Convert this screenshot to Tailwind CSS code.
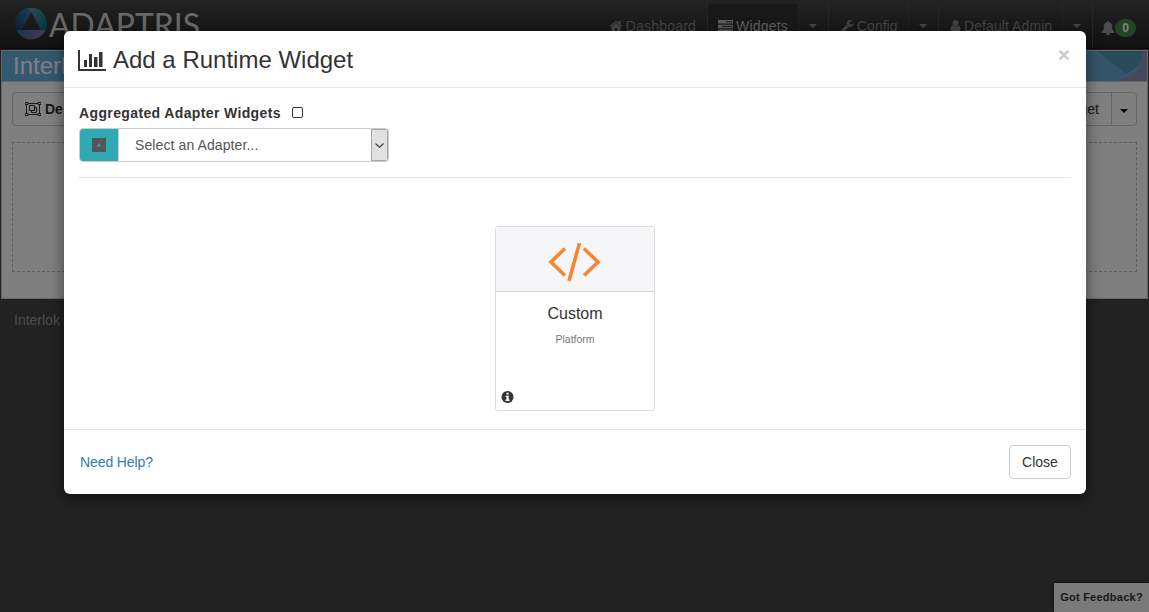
<!DOCTYPE html>
<html lang="en">
<head>
<meta charset="utf-8">
<title>Add a Runtime Widget</title>
<script src="https://cdn.jsdelivr.net/npm/@tailwindcss/browser@4"></script>
</head>
<body class="h-[612px] w-[1149px] overflow-hidden bg-[#444] font-['Liberation_Sans',Arial,sans-serif] text-sm text-[#333]">
<svg class="hidden">
  <symbol id="home" viewBox="0 0 1792 1792"><path d="M1472 992v480q0 26-19 45t-45 19h-384v-384h-256v384h-384q-26 0-45-19t-19-45v-480q0-1 .5-3t.5-3l575-474 575 474q1 2 1 6zm223-69l-62 74q-8 9-21 11h-3q-13 0-21-7l-692-577-692 577q-12 8-24 7-13-2-21-11l-62-74q-8-10-7-23.5t11-21.5l719-599q32-26 76-26t76 26l244 204v-195q0-14 9-23t23-9h192q14 0 23 9t9 23v408l219 182q10 8 11 21.5t-7 23.5z"/></symbol>
  <symbol id="wrench" viewBox="0 0 1792 1792"><path d="M448 1472q0-26-19-45t-45-19-45 19-19 45 19 45 45 19 45-19 19-45zm644-420l-682 682q-37 37-90 37-52 0-91-37l-106-108q-38-36-38-90 0-53 38-91l681-681q39 98 114.5 173.5t173.5 114.5zm634-435q0 39-23 106-47 134-164.5 217.5t-258.5 83.5q-185 0-316.5-131.5t-131.5-316.5 131.5-316.5 316.5-131.5q58 0 121.5 16.5t107.5 46.5q16 11 16 28t-16 28l-293 169v224l193 107q5-3 79-48.5t135.5-81 70.5-35.5q15 0 23.5 10t8.5 25z"/></symbol>
  <symbol id="user" viewBox="192 0 1408 1792"><path d="M1536 1399q0 109-62.500 187t-150.500 78h-854q-88 0-150.500-78t-62.500-187q0-85 8.500-160.500t31.500-152 58.500-131 94-89 134.500-34.500q131 128 313 128t313-128q76 0 134.500 34.500t94 89 58.500 131 31.500 152 8.500 160.500zm-256-887q0 159-112.500 271.500t-271.500 112.500-271.500-112.500-112.500-271.500 112.500-271.500 271.500-112.500 271.500 112.500 112.500 271.500z"/></symbol>
  <symbol id="bell" viewBox="0 0 1792 1792"><path d="M1728 1408q0 52-38 90t-90 38h-448q0 106-75 181t-181 75-181-75-75-181h-448q-52 0-90-38t-38-90q50-42 91-88t85-119.500 74.500-158.500 50-206 19.500-260q0-152 117-282.500t307-158.500q-8-19-8-39 0-40 28-68t68-28 68 28 28 68q0 20-8 39 190 28 307 158.500t117 282.500q0 139 19.500 260t50 206 74.500 158.500 85 119.500 91 88z"/></symbol>
  <symbol id="caret" viewBox="0 0 8 4"><path d="M0 0h8L4 4z"/></symbol>
</svg>

<div class="relative h-full">
  <header class="flex h-[49px] justify-between border-b border-[#111] bg-linear-to-b from-[#464646] to-[#222] text-[#888]">
    <div class="flex pl-[14px] pt-2">
      <svg width="190" height="40" viewBox="0 0 190 40">
        <defs>
          <linearGradient id="blade1" x1="0" y1="1" x2="1" y2="0"><stop offset="0" stop-color="#142f5c"/><stop offset="1" stop-color="#3d83b4"/></linearGradient>
          <linearGradient id="blade2" x1="0" y1="0" x2=".6" y2="1"><stop offset="0" stop-color="#5aa5b8"/><stop offset="1" stop-color="#0d6a7c"/></linearGradient>
          <linearGradient id="blade3"><stop offset="0" stop-color="#2d62a0"/><stop offset="1" stop-color="#8f78a5"/></linearGradient>
          <clipPath id="disc"><circle cx="17" cy="15.500" r="16"/></clipPath>
        </defs>
        <g clip-path="url(#disc)">
          <path d="M0-1h15l2.500 5.500L7 22 2 25-2 20z" fill="url(#blade1)"/>
          <path d="M13-1h21v25l-7-2L17.500 4.500z" fill="url(#blade2)"/>
          <path d="M1 22h26l7 1v10H0z" fill="url(#blade3)"/>
        </g>
        <text x="35" y="28.500" textLength="151" lengthAdjust="spacingAndGlyphs" font-family="Lato, sans-serif" font-size="32" fill="#d2d2d2">ADAPTRIS</text>
      </svg>
    </div>
    <nav class="mt-1 flex h-[44px]">
      <div class="flex items-center gap-[3px] pr-[11px]"><svg class="size-[14px] fill-current"><use href="#home"/></svg><span class="tracking-[0.2px]">Dashboard</span></div>
      <div class="flex w-[91px] items-center gap-[3px] border-l border-[#4c4c4c] bg-[#303030] pl-[10px] text-[#bbb]">
        <svg class="h-[13px] w-[15px] fill-current" viewBox="0 0 15 13"><path d="M0 0h15v3.500H0zM0 4.700h15v3.500H0zM0 9.400h15v3.500H0z"/><path d="M8 1.300h6v1H8zM4 6h10v1H4zM10 10.700h4v1h-4z" fill="#333"/></svg><span class="tracking-[0.2px]">Widgets</span></div>
      <div class="flex w-[30px] items-center justify-center border-l border-dotted border-[#555] pr-[2px]"><svg class="h-1 w-2 fill-current"><use href="#caret"/></svg></div>
      <div class="flex w-[80px] items-center gap-[3px] border-l border-[#4c4c4c] pl-[11px]"><svg class="size-[14px] fill-current"><use href="#wrench"/></svg>Config</div>
      <div class="flex w-[30px] items-center justify-center border-l border-dotted border-[#555] pr-[2px]"><svg class="h-1 w-2 fill-current"><use href="#caret"/></svg></div>
      <div class="flex w-[124px] items-center gap-[3px] border-l border-[#4c4c4c] pl-[11px]"><svg class="h-[14px] w-[11px] fill-current"><use href="#user"/></svg><span class="tracking-[0.08px]">Default Admin</span></div>
      <div class="flex w-[30px] items-center justify-center border-l border-dotted border-[#555] pr-[2px]"><svg class="h-1 w-2 fill-current"><use href="#caret"/></svg></div>
      <div class="flex w-[57px] items-center border-l border-[#4c4c4c] pl-2 pt-1"><svg class="size-[14px] fill-[#999]"><use href="#bell"/></svg><span class="flex h-[18px] w-[21px] items-center justify-center rounded-full bg-[#468847] text-xs font-bold text-white">0</span></div>
    </nav>
  </header>

  <main class="mx-px mt-px h-[249px] border border-[#ccc] bg-white">
    <div class="flex h-[31px] items-center justify-between border-b border-[#ccc] bg-[#67b1e0] pl-[11px] text-2xl text-white">
      <h1>Interlok</h1>
      <svg width="61" height="30" viewBox="0 0 61 30"><path d="M11 0h46c1 11-8 20-17 23z" fill="#5597b4"/><path d="M11 0h-11v30h27l13-7z" fill="#69a9d6"/><path d="M57 0h4v30H27c20-4 31-15 30-30z" fill="#8d90b7"/></svg>
    </div>
    <div class="flex justify-between px-[10px] pt-[10px]">
      <button class="flex h-[34px] w-[66px] items-center gap-1 rounded border border-[#ccc] pl-3 font-bold"><svg width="16" height="14" viewBox="0 0 16 14" fill="none" stroke="#333"><path d="M1.500 1.500h13v11h-13zM4.500 3.500h5v5h-5zM9.500 5.500h2v5h-5v-2"/><path d="M0 .5h3v2H0zM13 .5h3v2h-3zM0 11.500h3v2H0zM13 11.500h3v2h-3z" fill="#fff"/></svg>De</button>
      <div class="flex h-[34px] rounded border border-[#ccc]"><button class="px-3">Add Widget</button><button class="flex w-[25px] items-center justify-center border-l border-[#ccc] pt-1"><svg class="h-1 w-2"><use href="#caret"/></svg></button></div>
    </div>
    <div class="mx-[10px] mt-4 h-[130px] border border-dashed border-[#bbb]"></div>
  </main>
  <footer class="pl-[14px] pt-[11px] text-[#999]">Interlok</footer>
  <div class="absolute bottom-0 right-0 flex h-[29px] w-[95px] items-center justify-center bg-[#f5f5f5] pt-px text-[11px] font-bold tracking-[0.25px] shadow-[0_0_3px_#000]">Got Feedback?</div>
</div>

<div class="absolute inset-0 bg-black/50"></div>

<section class="absolute left-16 top-[31px] flex h-[463px] w-[1022px] flex-col rounded-md bg-white shadow-[0_5px_15px_rgba(0,0,0,0.5)]">
  <div class="flex h-[57px] justify-between border-b border-[#e5e5e5] pl-[14px] pr-4">
    <h2 class="flex items-center gap-[7px] pt-[2px] text-2xl"><svg width="28" height="21" viewBox="0 0 28 21" fill="#333"><path d="M0 0h2v19h26v2H0zM6 10h3v7H6zM11 4h3v13h-3zM16 7h3.500v10H16zM21 2h3.500v15H21z"/></svg>Add a Runtime Widget</h2>
    <button class="h-[47px] text-[21px] font-bold text-[#ccc]">×</button>
  </div>
  <div class="flex h-[342px] flex-col border-b border-[#e5e5e5] px-[15px] pt-[15px]">
    <label class="flex h-5 items-center gap-[11px] font-bold tracking-[0.37px]">Aggregated Adapter Widgets<span class="mb-px size-[11px] rounded-[2px] border border-[#333]"></span></label>
    <div class="mt-[5px] flex h-[34px] w-[310px] overflow-hidden rounded border border-[#ccc]">
      <div class="flex w-[39px] items-center justify-center border-r border-[#ccc] bg-[#2fa9b3] pr-px"><svg width="14" height="14" viewBox="0 0 14 14"><path d="M0 0h14v14H0z" fill="#555"/><path d="M7 5l2 3.500H5z" fill="#2fa9b3"/><path d="M7.500 5L11 0M9 8.500l5 4M5 8.500H0" stroke="#3c7579" stroke-width=".6"/></svg></div>
      <div class="flex flex-1 items-center pl-4 tracking-[0.1px] text-[#555]">Select an Adapter...</div>
      <div class="flex w-[17px] items-center justify-center border border-[#a5a5a5] bg-[#e1e1e1]"><svg width="9" height="5" viewBox="0 0 9 5" fill="none" stroke="#444" stroke-width="1.200"><path d="M.5.500L4.500 4.300 8.500.500"/></svg></div>
    </div>
    <hr class="mt-[15px] border-[#e5e5e5]">
    <article class="mx-auto mt-12 flex h-[185px] w-[160px] flex-col rounded-[3px] border border-[#ddd]">
      <div class="flex h-[65px] items-center justify-center border-b border-[#d6d6da] bg-[#f6f6f9] pr-[2px] pt-[6px]"><svg width="53" height="38" viewBox="0 0 53 38" fill="none" stroke="#f58634" stroke-width="3.600"><path d="M17 5.500L3 19l14 13.500M36 5.500L50 19 36 32.500M31.500 0L21 38"/></svg></div>
      <h3 class="mt-[10px] text-center text-base">Custom</h3>
      <p class="mt-1 text-center text-[10.500px] leading-[18px] text-[#777]">Platform</p>
      <svg class="mb-[7px] ml-[5px] mt-auto" width="13" height="12" viewBox="0 0 12 12"><circle cx="6" cy="6" r="6" fill="#333"/><path d="M5 1.800h2.200v1.700H5zM4.200 4.700h3v3.700H8V10H4V8.400h1V6.100h-.8z" fill="#fff"/></svg>
    </article>
  </div>
  <div class="flex flex-1 items-center justify-between pl-4 pr-[15px]">
    <a class="tracking-[-0.1px] text-[#337ab7]">Need Help?</a>
    <button class="h-[34px] w-[62px] rounded border border-[#ccc]">Close</button>
  </div>
</section>
</body>
</html>
